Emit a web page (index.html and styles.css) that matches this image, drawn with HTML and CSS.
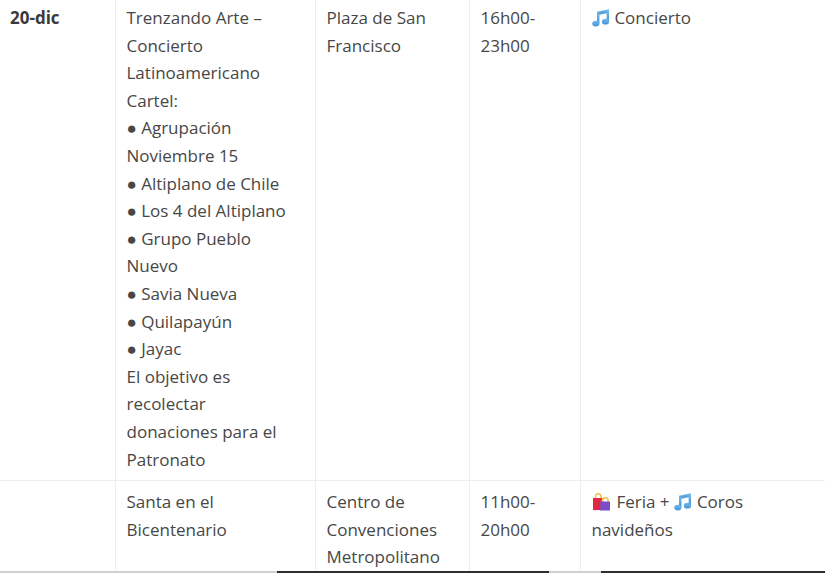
FILE: index.html
```html
<!DOCTYPE html>
<html lang="es">
<head>
<meta charset="utf-8">
<title>Agenda</title>
<link rel="stylesheet" href="styles.css">
</head>
<body>
<div class="page">
  <div class="scroll">
    <table class="agenda">
      <colgroup>
        <col class="w-date">
        <col class="w-event">
        <col class="w-place">
        <col class="w-time">
        <col class="w-type">
      </colgroup>
      <tbody>
        <tr>
          <td class="date">20-dic</td>
          <td class="event">Trenzando Arte – Concierto Latinoamericano<br>Cartel:<br>● Agrupación Noviembre 15<br>● Altiplano de Chile<br>● Los 4 del Altiplano<br>● Grupo Pueblo Nuevo<br>● Savia Nueva<br>● Quilapayún<br>● Jayac<br>El objetivo es recolectar donaciones para el Patronato</td>
          <td>Plaza de San Francisco</td>
          <td>16h00-<br>23h00</td>
          <td class="type"><svg class="ico" viewBox="0 0 16 16" aria-hidden="true"><defs><linearGradient id="mg1" x1="0" y1="0" x2="0" y2="1"><stop offset="0" stop-color="#72baef"/><stop offset="1" stop-color="#4493d4"/></linearGradient></defs><path d="M4.6 2.6 L15.6 0.2 V3.4 L4.6 5.8 Z" fill="url(#mg1)"/><rect x="4.6" y="3.5" width="2.2" height="9.5" fill="url(#mg1)"/><rect x="13.4" y="1" width="2.2" height="10.5" fill="url(#mg1)"/><ellipse cx="3.5" cy="13.3" rx="3.3" ry="2.6" fill="url(#mg1)"/><ellipse cx="12.3" cy="11.6" rx="3.3" ry="2.6" fill="url(#mg1)"/></svg> Concierto</td>
        </tr>
        <tr>
          <td class="date"></td>
          <td class="event">Santa en el Bicentenario</td>
          <td>Centro de Convenciones Metropolitano</td>
          <td>11h00-<br>20h00</td>
          <td class="type"><svg class="ico bag" viewBox="0 0 16 16" aria-hidden="true"><path d="M2.2 5.4 V3.2 a2.6 2.6 0 0 1 5.2 0 V5.4" fill="none" stroke="#f2c14a" stroke-width="1.4"/><rect x="0" y="4.6" width="9.2" height="11" fill="#e3263f"/><path d="M8.6 8.4 V6.9 a2.6 2.6 0 0 1 5.2 0 V8.4" fill="none" stroke="#f2c14a" stroke-width="1.4"/><rect x="6.6" y="7.8" width="9.4" height="8.2" fill="#7b4cc6"/></svg> Feria + <svg class="ico" viewBox="0 0 16 16" aria-hidden="true"><defs><linearGradient id="mg2" x1="0" y1="0" x2="0" y2="1"><stop offset="0" stop-color="#72baef"/><stop offset="1" stop-color="#4493d4"/></linearGradient></defs><path d="M4.6 2.6 L15.6 0.2 V3.4 L4.6 5.8 Z" fill="url(#mg2)"/><rect x="4.6" y="3.5" width="2.2" height="9.5" fill="url(#mg2)"/><rect x="13.4" y="1" width="2.2" height="10.5" fill="url(#mg2)"/><ellipse cx="3.5" cy="13.3" rx="3.3" ry="2.6" fill="url(#mg2)"/><ellipse cx="12.3" cy="11.6" rx="3.3" ry="2.6" fill="url(#mg2)"/></svg> Coros navideños</td>
        </tr>
      </tbody>
    </table>
  </div>
  <div class="bar">
    <span class="seg light s1"></span>
    <span class="seg dark s2"></span>
    <span class="seg light s3"></span>
    <span class="seg dark s4"></span>
  </div>
</div>
</body>
</html>
```
FILE: styles.css
```css
html, body {
  margin: 0;
  padding: 0;
  background: #ffffff;
  overflow: hidden;
}

.page {
  width: 825px;
  height: 573px;
  display: flex;
  flex-direction: column;
  overflow: hidden;
}

.scroll {
  flex: 1;
  overflow: hidden;
  min-height: 0;
}

.agenda {
  border-collapse: collapse;
  table-layout: fixed;
  width: 851px;
  margin-top: -4px;
  margin-left: -1px;
  font-family: "Open Sans", "Liberation Sans", sans-serif;
  font-size: 17px;
  line-height: 27.6px;
  color: #474747;
}

.w-date { width: 116px; }
.w-event { width: 200px; }
.w-place { width: 154px; }
.w-time { width: 111px; }
.w-type { width: 270px; }

.agenda td {
  vertical-align: top;
  padding: 7px 10px 7px 11px;
  border-top: 1px solid #eeeeee;
  border-left: 1px solid #eeeeee;
}

.agenda td.date {
  border-left: none;
  font-weight: 700;
  color: #3a3a3a;
}

.agenda td.event {
  padding-right: 18px;
}

.agenda td.type {
  padding-right: 50px;
}

.ico {
  width: 17.5px;
  height: 17.5px;
  vertical-align: -2.5px;
  margin-right: 1px;
}

.ico.bag {
  margin-left: 1px;
  margin-right: 2px;
}

.bar {
  height: 2px;
  display: flex;
  flex: none;
}

.seg { display: block; height: 2px; }
.light { background: #cfcfcf; }
.dark { background: #2e2e2e; }
.s1 { width: 277px; }
.s2 { width: 272px; }
.s3 { width: 52px; }
.s4 { flex: 1; }
```
